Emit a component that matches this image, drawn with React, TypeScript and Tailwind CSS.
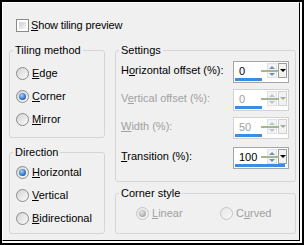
import React from 'react'

// accelerator letter underlined, like a win32 dialog
const Acc = ({ text, at }: { text: string; at: number }) => (
    <>
        {text.slice(0, at)}
        <span className="underline underline-offset-[1px]">{text[at]}</span>
        {text.slice(at + 1)}
    </>
)

const Radio = ({ checked, disabled }: { checked?: boolean; disabled?: boolean }) => (
    <span
        className={`w-[13px] h-[13px] rounded-full border flex items-center justify-center shrink-0 ${disabled ? 'border-[#c4c4c4] bg-linear-to-br from-[#e6e6e6] to-[#f8f8f8]' : 'border-[#8a8a8a] bg-linear-to-br from-[#d4d4d4] to-[#fbfbfb]'
            }`}
    >
        {checked && (
            <span
                className={`w-[7px] h-[7px] rounded-full ${disabled
                    ? 'bg-[radial-gradient(circle_at_40%_35%,#e8e8e8,#a8a8a8_70%)]'
                    : 'bg-[radial-gradient(circle_at_40%_35%,#a9d6ff,#2f70c4_60%,#173f7e)]'
                    }`}
            />
        )}
    </span>
)

const RadioRow = ({ label, at, checked, disabled, h = 'h-[23px]' }: { label: string; at: number; checked?: boolean; disabled?: boolean; h?: string }) => (
    <div className={`flex items-center gap-[3px] ${h} ${disabled ? 'text-[#a0a0a0]' : 'text-black'}`}>
        <Radio checked={checked} disabled={disabled} />
        <span>
            <Acc text={label} at={at} />
        </span>
    </div>
)

const Spin = ({ value, fill, disabled }: { value: string; fill: number; disabled?: boolean }) => (
    <div className={`w-[56px] h-[22px] flex flex-col border bg-white ${disabled ? 'border-[#d2d2d2]' : 'border-[#a5a5a5]'}`}>
        <div className="flex h-[16px] mt-[1px]">
            <div className={`relative flex-1 min-w-0 pl-[5px] pt-[2px] leading-[13px] ${disabled ? 'text-[#a0a0a0]' : 'text-black'}`}>
                {value}
                {/* green marker line across the spin */}
                <div className="absolute right-[-12px] top-[7px] w-[18px] h-[2px] bg-[#a6b58c]" />
            </div>
            <div className="w-[10px] flex flex-col items-center justify-center gap-[4px] border border-[#e2e2e2] bg-[#f4f4f4]">
                <span className={`w-0 h-0 border-x-[3px] border-x-transparent border-b-[3px] ${disabled ? 'border-b-[#b8c4d6]' : 'border-b-[#6f8fc0]'}`} />
                <span className={`w-0 h-0 border-x-[3px] border-x-transparent border-t-[3px] ${disabled ? 'border-t-[#b8c4d6]' : 'border-t-[#6f8fc0]'}`} />
            </div>
            <div className={`w-[9px] ml-[1px] mr-[1px] flex items-center justify-center border bg-[#f2f2f2] ${disabled ? 'border-[#d0d0d0]' : 'border-[#9c9c9c]'}`}>
                <span className={`w-0 h-0 border-x-[3px] border-x-transparent border-t-[3px] ${disabled ? 'border-t-[#a8a8a8]' : 'border-t-black'}`} />
            </div>
        </div>
        <div className="h-[3px] bg-[#3a8de2] mt-auto mb-[1px] ml-[1px]" style={{ width: fill }} />
    </div>
)

const Group = ({ title, className, inner, children }: { title: string; className?: string; inner?: string; children: React.ReactNode }) => (
    <fieldset className={`border border-[#d5d5d5] rounded-[3px] ${className ?? ''}`}>
        <legend className="ml-[3px] px-[2px] leading-[13px]">{title}</legend>
        <div className={inner}>{children}</div>
    </fieldset>
)

const SettingRow = ({ label, at, value, fill, disabled, className }: { label: string; at: number; value: string; fill: number; disabled?: boolean; className?: string }) => (
    <div className={`flex items-center justify-between h-[22px] ${className ?? ''}`}>
        <span className={`pb-[4px] ${disabled ? 'text-[#a0a0a0]' : 'text-black'}`}>
            <Acc text={label} at={at} />
        </span>
        <Spin value={value} fill={fill} disabled={disabled} />
    </div>
)

export default function App() {
    return (
        <div className="w-[304px] h-[245px] bg-white border-2 border-black flex font-['Liberation_Sans',Arial,sans-serif] text-[11px]">
            <div className="flex-1 mr-[2px] mb-[2px] bg-[#f0f0f0] border-t border-l border-t-white border-l-white border-r border-b border-r-black border-b-black pl-[6px] pt-[16px]">
                {/* checkbox */}
                <div className="flex items-center gap-[2px] h-[13px] ml-[7px]">
                    <span className="w-[13px] h-[13px] border border-[#8a8a8a] bg-white p-[2px] shrink-0">
                        <span className="block w-full h-full bg-linear-to-br from-[#cfcfcf] to-[#f6f6f6]" />
                    </span>
                    <span className="tracking-[-0.15px]">
                        <Acc text="Show tiling preview" at={0} />
                    </span>
                </div>

                <div className="flex gap-[10px] mt-[12px]">
                    {/* left column */}
                    <div className="w-[96px] flex flex-col gap-[8px]">
                        <Group title="Tiling method" className="h-[94px]" inner="pl-[6px] pt-[5px]">
                            <RadioRow label="Edge" at={0} />
                            <RadioRow label="Corner" at={0} checked />
                            <RadioRow label="Mirror" at={0} />
                        </Group>
                        <Group title="Direction" className="h-[88px]" inner="pl-[6px] pt-[2px]">
                            <RadioRow label="Horizontal" at={0} checked />
                            <RadioRow label="Vertical" at={0} />
                            <RadioRow label="Bidirectional" at={0} />
                        </Group>
                    </div>

                    {/* right column */}
                    <div className="w-[181px] flex flex-col gap-[5px]">
                        <Group title="Settings" className="h-[138px]" inner="pl-[5px] pr-[6px] pt-[4px]">
                            <SettingRow label="Horizontal offset (%):" at={1} value="0" fill={27} />
                            <SettingRow label="Vertical offset (%):" at={1} value="0" fill={27} disabled className="mt-[6px]" />
                            <SettingRow label="Width (%):" at={0} value="50" fill={27} disabled className="mt-[6px]" />
                            <SettingRow label="Transition (%):" at={0} value="100" fill={50} className="mt-[8px]" />
                        </Group>
                        <Group title="Corner style" className="h-[47px]" inner="pl-[20px] pt-[3px]">
                            <div className="flex">
                                <div className="w-[84px]">
                                    <RadioRow label="Linear" at={0} checked disabled h="h-[20px]" />
                                </div>
                                <RadioRow label="Curved" at={1} disabled h="h-[20px]" />
                            </div>
                        </Group>
                    </div>
                </div>
            </div>
        </div>
    )
}
